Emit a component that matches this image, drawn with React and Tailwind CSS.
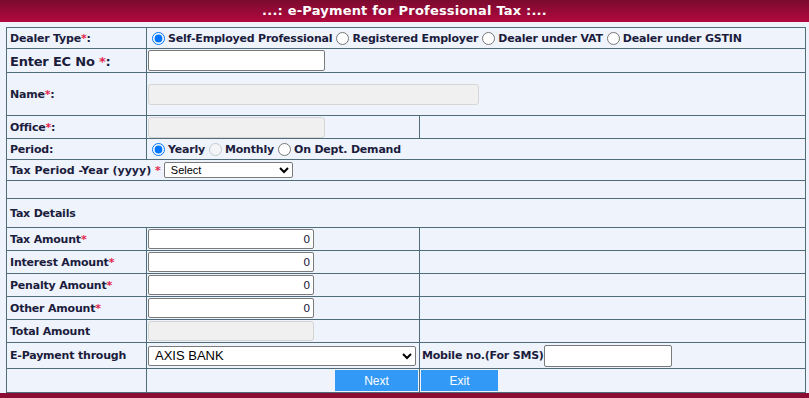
import React from 'react';

const Star = () => <span className="text-[#e2264d]">*</span>;

const cell = 'border border-[#4f6c7b] px-[3px] pt-[2px] pb-0 align-middle';
const box = 'border border-[#4f6c7b] px-0 py-0 align-middle';

const Radio = ({ checked, disabled, name, label }) => (
  <label className="inline-flex items-center">
    <input
      type="radio"
      name={name}
      defaultChecked={checked}
      disabled={disabled}
      className="w-[13px] h-[13px] ml-[4px] mr-[3px] accent-[#0075ff]"
    />
    <span className="pt-[2px]">{label}</span>
  </label>
);

const AmountRow = ({ label, disabled }) => (
  <tr className="h-[23px]">
    <td className={cell}>
      {label}
      {!disabled && <Star />}
    </td>
    <td className={`${box} pl-[1px]`}>
      {disabled ? (
        <input
          disabled
          className="block w-[166px] h-[20px] bg-[#f0f0f0] border border-[#d4d4d4] rounded-[3px]"
        />
      ) : (
        <input
          defaultValue="0"
          className="block w-[166px] h-[20px] bg-white border border-[#7a7a7a] rounded-[2px] text-right pr-[3px] font-normal text-[11px] text-[#1c1c40]"
        />
      )}
    </td>
    <td className={cell}></td>
  </tr>
);

export default function App() {
  return (
    <div className="w-[809px] h-[398px] bg-[#eef3fc] font-['DejaVu_Sans','Verdana',sans-serif] text-[11px] tracking-[-0.2px] font-bold text-[#1c1c3c] flex flex-col overflow-hidden">
      <div className="h-[22px] shrink-0 bg-gradient-to-b from-[#7a0a2e] to-[#b3083f] text-white text-[13px] tracking-[0.2px] font-bold flex items-center justify-center">
        ...: e-Payment for Professional Tax :...
      </div>

      <div className="pt-[5px] pl-[6px]">
        <table className="w-[800px] table-fixed border-collapse">
          <colgroup>
            <col className="w-[140px]" />
            <col className="w-[273px]" />
            <col />
          </colgroup>
          <tbody>
            <tr className="h-[21px]">
              <td className={cell}>
                Dealer Type<Star />:
              </td>
              <td className={`${box} pl-[1px]`} colSpan={2}>
                <div className="flex items-center">
                  <Radio name="dt" checked label="Self-Employed Professional" />
                  <Radio name="dt" label="Registered Employer" />
                  <Radio name="dt" label="Dealer under VAT" />
                  <Radio name="dt" label="Dealer under GSTIN" />
                </div>
              </td>
            </tr>

            <tr className="h-[24px]">
              <td className={`${cell} text-[13px]`}>
                Enter EC No <Star />:
              </td>
              <td className={`${box} pl-[1px]`} colSpan={2}>
                <input className="block w-[177px] h-[21px] bg-white border border-[#7a7a7a] rounded-[2px]" />
              </td>
            </tr>

            <tr className="h-[43px]">
              <td className={cell}>
                Name<Star />:
              </td>
              <td className={`${box} pl-[1px]`} colSpan={2}>
                <input
                  disabled
                  className="block w-[331px] h-[21px] bg-[#f0f0f0] border border-[#d6d6d6] rounded-[3px]"
                />
              </td>
            </tr>

            <tr className="h-[23px]">
              <td className={cell}>
                Office<Star />:
              </td>
              <td className={`${box} pl-[1px]`}>
                <input
                  disabled
                  className="block w-[177px] h-[21px] bg-[#f0f0f0] border border-[#d6d6d6] rounded-[3px]"
                />
              </td>
              <td className={cell}></td>
            </tr>

            <tr className="h-[21px]">
              <td className={cell}>Period:</td>
              <td className={`${box} pl-[1px]`} colSpan={2}>
                <div className="flex items-center">
                  <Radio name="pd" checked label="Yearly" />
                  <Radio name="pd" disabled label="Monthly" />
                  <Radio name="pd" label="On Dept. Demand" />
                </div>
              </td>
            </tr>

            <tr className="h-[21px]">
              <td className={`${box} pl-[3px]`} colSpan={3}>
                <div className="flex items-center">
                  <span className="pt-[2px] tracking-normal">
                    Tax Period -Year (yyyy) <Star />
                  </span>
                  <select className="ml-[3px] w-[129px] h-[16px] bg-white border border-[#7a7a7a] rounded-[2px] text-[11px] tracking-normal font-normal font-['Liberation_Sans',Arial,sans-serif] text-black pl-[2px]">
                    <option>Select</option>
                  </select>
                </div>
              </td>
            </tr>

            <tr className="h-[18px]">
              <td className={cell} colSpan={3}></td>
            </tr>

            <tr className="h-[29px]">
              <td className={cell} colSpan={3}>
                Tax Details
              </td>
            </tr>

            <AmountRow label="Tax Amount" />
            <AmountRow label="Interest Amount" />
            <AmountRow label="Penalty Amount" />
            <AmountRow label="Other Amount" />
            <AmountRow label="Total Amount" disabled />

            <tr className="h-[26px]">
              <td className={cell}>E-Payment through</td>
              <td className={`${box} pl-[1px]`}>
                <select className="block w-[268px] h-[20px] bg-white border border-[#7a7a7a] rounded-[2px] text-[13px] tracking-normal font-normal font-['Liberation_Sans',Arial,sans-serif] text-black pl-[2px]">
                  <option>AXIS BANK</option>
                </select>
              </td>
              <td className={`${box} pl-[2px]`}>
                <div className="flex items-center">
                  <span className="pt-[2px]">Mobile no.(For SMS)</span>
                  <input className="w-[128px] h-[22px] bg-white border border-[#7a7a7a] rounded-[2px]" />
                </div>
              </td>
            </tr>

            <tr className="h-[24px]">
              <td className={cell}></td>
              <td className={`${box} text-right pr-[1px]`}>
                <button className="inline-block align-middle w-[83px] h-[21px] bg-[#3399f6] text-white text-[12px] tracking-normal font-normal font-['Liberation_Sans',Arial,sans-serif]">
                  Next
                </button>
              </td>
              <td className={`${box} pl-[1px]`}>
                <button className="block w-[77px] h-[21px] bg-[#3399f6] text-white text-[12px] tracking-normal font-normal font-['Liberation_Sans',Arial,sans-serif]">
                  Exit
                </button>
              </td>
            </tr>
          </tbody>
        </table>
      </div>

      <div className="mt-auto h-[5px] shrink-0 bg-[#8b0d34]" />
    </div>
  );
}
